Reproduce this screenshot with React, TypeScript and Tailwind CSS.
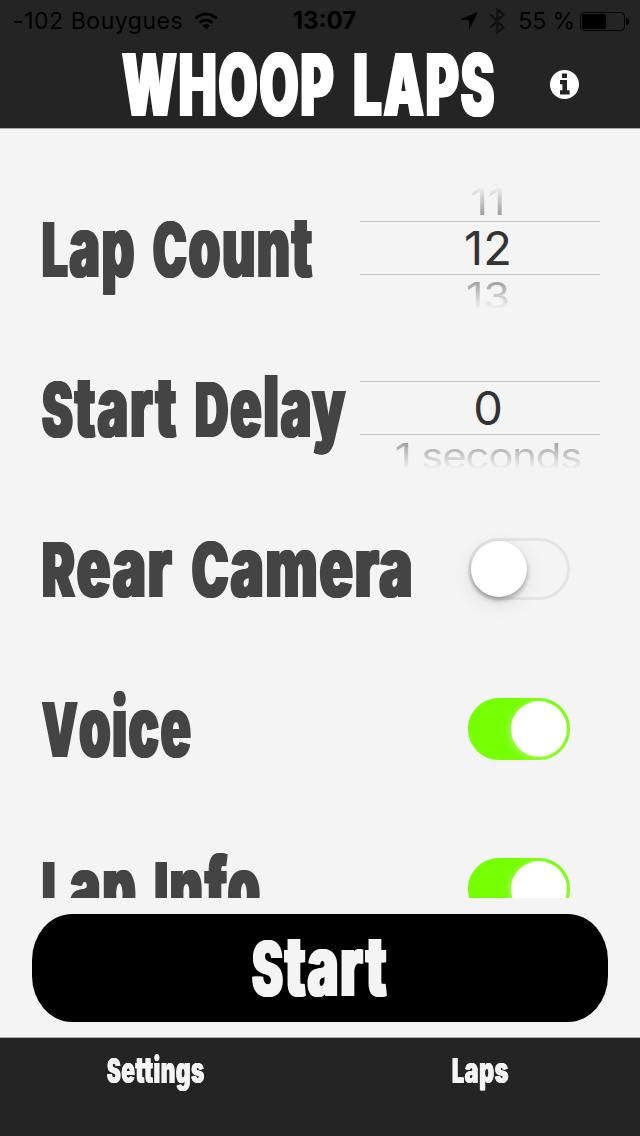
import React from "react"

type FitTextProps = {
  text: string
  width: number
  className?: string
  wordClassName?: string
}

// squeezes a heavy face horizontally until it fills the given width
const FitText = ({ text, width, className = "", wordClassName = "" }: FitTextProps) => {
  const ref = React.useRef<HTMLSpanElement>(null)
  const [scale, setScale] = React.useState(0.6)

  React.useLayoutEffect(() => {
    if (ref.current) setScale(width / ref.current.offsetWidth)
  }, [text, width])

  return (
    <div className="shrink-0" style={{ width }}>
      <span
        ref={ref}
        className={`inline-block origin-left whitespace-nowrap align-top font-black leading-none ${className}`}
        style={{ transform: `scaleX(${scale})` }}
      >
        {text.split(" ").map((word, i) => (
          <React.Fragment key={word}>
            {i > 0 && " "}
            <span className={`inline-block ${wordClassName}`}>{word}</span>
          </React.Fragment>
        ))}
      </span>
    </div>
  )
}

const WifiIcon = () => (
  <svg width="26" height="20" viewBox="0 0 26 20" fill="none" stroke="#000" strokeWidth="3">
    <path d="M1.5 7.2a16.5 16.5 0 0 1 23 0" />
    <path d="M6 11.8a10 10 0 0 1 14 0" />
    <path d="M13 19l-4-4.1a5.7 5.7 0 0 1 8 0z" fill="#000" stroke="none" />
  </svg>
)

const LocationIcon = () => (
  <svg className="mr-[11px]" width="18" height="18" viewBox="0 0 18 18">
    <path d="M0 7.5L18 0 9 18V8.2z" />
  </svg>
)

const BluetoothIcon = () => (
  <svg width="17" height="28" viewBox="0 0 17 28" fill="none" stroke="#111" strokeWidth="2.2">
    <path d="M1.5 7.5l13 13-6 5V2.5l6 5-13 13" />
  </svg>
)

const InfoIcon = () => (
  <svg width="29" height="29" viewBox="0 0 29 29">
    <circle cx="14.5" cy="14.5" r="14.5" fill="#fff" />
    <path d="M12 3.5h5v4.5h-5zM10 10h7v10.3h2.6v4.2H10v-4.2h2.4v-6.1H10z" fill="#242424" />
  </svg>
)

const StatusBar = () => (
  <div className="grid h-10 grid-cols-3 items-center pl-[13px] pr-[11px] pt-[2px] text-[23px] text-black">
    <div className="flex items-center gap-[11px] whitespace-nowrap">
      <span className="tracking-[0.55px]">-102 Bouygues</span>
      <WifiIcon />
    </div>
    <div className="pl-[7px] text-center text-[24px] font-bold">13:07</div>
    <div className="flex items-center justify-end whitespace-nowrap">
      <LocationIcon />
      <BluetoothIcon />
      <span className="ml-[12px] mr-[5px] tracking-[-0.1px]">55 %</span>
      <span className="flex h-[19px] w-[45px] shrink-0 rounded-[4px] border border-black p-[1px]">
        <span className="w-[24px] rounded-[2px] bg-black" />
      </span>
      <span className="ml-[1px] h-[7px] w-[3px] rounded-r-full bg-black" />
    </div>
  </div>
)

type PickerProps = {
  previous?: string
  value: string
  next: string
  nextClassName?: string
}

const Picker = ({ previous, value, next, nextClassName = "text-[43px]" }: PickerProps) => (
  <div className="flex h-40 w-60 flex-col text-center text-[#333]">
    <div className="h-[53px] pl-4 pt-[13px] text-[43px] leading-10 text-[#8a8a8a] mask-[linear-gradient(transparent_18px,black_53px)]">
      <span className="inline-block scale-y-[0.85]">{previous}</span>
    </div>
    <div className="h-[54px] border-y border-[#c3c3c3] pl-4 text-[47px] leading-[52px]">{value}</div>
    <div className="h-[53px] pl-4 leading-[41px] text-[#8a8a8a] mask-[linear-gradient(black,transparent_34px)]">
      <span className={`inline-block scale-y-[0.85] ${nextClassName}`}>{next}</span>
    </div>
  </div>
)

const Toggle = ({ on }: { on: boolean }) => (
  <div
    className={`mr-[30px] mt-[2px] flex h-[62px] w-[102px] rounded-full border-[3px] ${
      on ? "justify-end border-[#76ff03] bg-[#76ff03]" : "border-[#e5e5e5]"
    }`}
  >
    <div
      className={`size-14 rounded-full bg-white ${
        on ? "shadow-[-2px_2px_8px_rgba(255,255,255,0.3)]" : "shadow-[0_3px_5px_rgba(0,0,0,0.3),0_6px_20px_rgba(0,0,0,0.1)]"
      }`}
    />
  </div>
)

type RowProps = {
  label: string
  width: number
  children: React.ReactNode
}

const Row = ({ label, width, children }: RowProps) => (
  <div className="flex h-40 items-center justify-between">
    <div className="pb-1 pl-[2px]">
      <FitText
        text={label}
        width={width}
        className="text-[85px] tracking-[3px] text-[#444] [word-spacing:8px] text-shadow-[2px_0_currentColor,-2px_0_currentColor]"
        wordClassName="first-letter:text-[76px]"
      />
    </div>
    {children}
  </div>
)

const App = () => {
  return (
    <div className="flex h-[1136px] w-[640px] flex-col overflow-hidden bg-[#f4f4f4] font-['Inter',sans-serif]">
      <header className="h-[129px] shrink-0 border-b border-[#aaa] bg-[#242424]">
        <StatusBar />
        <div className="flex h-[88px] items-center justify-between pl-[122px] pr-[61px]">
          <FitText
            text="WHOOP LAPS"
            width={374}
            className="text-[87px] tracking-[3px] text-white [word-spacing:10px] text-shadow-[2px_0_currentColor,-2px_0_currentColor]"
          />
          <InfoIcon />
        </div>
      </header>

      <main className="h-[769px] shrink-0 overflow-hidden px-10 pt-[39px]">
        <Row label="Lap Count" width={272}>
          <Picker previous="11" value="12" next="13" />
        </Row>
        <Row label="Start Delay" width={305}>
          <Picker value="0" next="1 seconds" nextClassName="text-[42px] tracking-[-1.2px]" />
        </Row>
        <Row label="Rear Camera" width={372}>
          <Toggle on={false} />
        </Row>
        <Row label="Voice" width={151}>
          <Toggle on />
        </Row>
        <Row label="Lap Info" width={220}>
          <Toggle on />
        </Row>
      </main>

      <div className="h-[139px] shrink-0 px-8 pt-4">
        <button className="flex h-[108px] w-full items-center justify-center rounded-[40px/46px] bg-black pb-[6px]">
          <FitText
            text="Start"
            width={136}
            className="text-[85px] tracking-[3px] text-[#f4f4f4] text-shadow-[2px_0_currentColor,-2px_0_currentColor]"
            wordClassName="first-letter:text-[76px]"
          />
        </button>
      </div>

      <nav className="grid grow grid-cols-2 border-t border-[#aaa] bg-[#242424] text-[#f4f4f4]">
        <div className="flex h-[66px] items-center justify-center pb-[3px] pr-[8px]">
          <FitText
            text="Settings"
            width={98}
            className="text-[37px] tracking-[1px] text-shadow-[0.7px_0_currentColor,-0.7px_0_currentColor]"
            wordClassName="first-letter:text-[34px]"
          />
        </div>
        <div className="flex h-[66px] items-center justify-center pb-[3px]">
          <FitText
            text="Laps"
            width={57}
            className="text-[37px] tracking-[1px] text-shadow-[0.7px_0_currentColor,-0.7px_0_currentColor]"
            wordClassName="first-letter:text-[34px]"
          />
        </div>
      </nav>
    </div>
  )
}

export default App
